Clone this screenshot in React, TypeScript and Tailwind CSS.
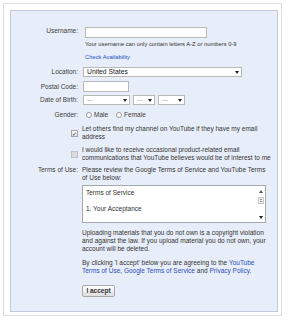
import type { ReactNode } from 'react';

function Arrow() {
  return <span className="h-0 w-0 border-x-[2px] border-t-[3px] border-x-transparent border-t-[#222]" />;
}

function UpArrow() {
  return <span className="h-0 w-0 border-x-[2px] border-b-[3px] border-x-transparent border-b-[#555]" />;
}

function Label({ children, className = '' }: { children?: ReactNode; className?: string }) {
  return <div className={`w-[67px] shrink-0 text-right text-[#3c3c3c] ${className}`}>{children}</div>;
}

function Lines({ lines }: { lines: ReactNode[] }) {
  return (
    <div className="w-[191px] whitespace-nowrap">
      {lines.map((l, i) => (
        <div key={i}>{l}</div>
      ))}
    </div>
  );
}

function Select({ width, value, big }: { width: string; value: string; big?: boolean }) {
  return (
    <div
      className={`flex h-[10px] items-center justify-between border border-[#b8b8b8] bg-white pl-[3px] pr-[2px] ${width} ${
        big ? 'text-[6.8px] text-[#222]' : 'text-[6px] text-[#777]'
      }`}
    >
      <span className="leading-[8px]">{value}</span>
      <Arrow />
    </div>
  );
}

function Radio({ label }: { label: string }) {
  return (
    <span className="flex items-center gap-[2px]">
      <span className="h-[6px] w-[6px] rounded-full border border-[#9a9a9a] bg-white" />
      <span className="text-[#3c3c3c]">{label}</span>
    </span>
  );
}

const link = 'text-[#2a4dc0]';

export default function App() {
  return (
    <div className="h-[320px] w-[290px] bg-white font-['Liberation_Sans',Arial,sans-serif] text-[6.5px] leading-[8px] text-[#333]">
      <div className="ml-[3px] pt-[3px]">
        <div className="h-[313px] w-[279px] border border-[#dedede] pl-[6px] pt-[6px]">
          <div className="flex h-[302px] w-[268px] flex-col border border-[#bfcbdd] bg-[#e8eef9]">
            {/* username */}
            <div className="mt-[16px] flex gap-[4px]">
              <Label>Username:</Label>
              <input className="ml-[3px] h-[11px] w-[122px] border border-[#b8b8b8] bg-white" />
            </div>
            <div className="mt-[2px] flex gap-[4px]">
              <Label />
              <div className="ml-[3px] whitespace-nowrap text-[5.8px] text-[#333]">
                Your username can only contain letters A-Z or numbers 0-9
              </div>
            </div>
            <div className="mt-[5px] flex gap-[4px]">
              <Label />
              <div className={`ml-[3px] text-[5.8px] ${link}`}>Check Availability</div>
            </div>

            {/* location */}
            <div className="mt-[6px] flex items-center gap-[4px]">
              <Label>Location:</Label>
              <div className="ml-[1px]">
                <Select width="w-[159px]" value="United States" big />
              </div>
            </div>

            {/* postal code */}
            <div className="mt-[4px] flex items-center gap-[4px]">
              <Label>Postal Code:</Label>
              <input className="ml-[1px] h-[11px] w-[46px] border border-[#b8b8b8] bg-white" />
            </div>

            {/* date of birth */}
            <div className="mt-[3px] flex items-center gap-[4px]">
              <Label>Date of Birth:</Label>
              <div className="ml-[1px] flex gap-[3px]">
                <Select width="w-[47px]" value="---" />
                <Select width="w-[22px]" value="---" />
                <Select width="w-[27px]" value="---" />
              </div>
            </div>

            {/* gender */}
            <div className="mt-[6px] flex h-[8px] items-center gap-[4px]">
              <Label>Gender:</Label>
              <div className="ml-[4px] flex items-center gap-[8px]">
                <Radio label="Male" />
                <Radio label="Female" />
              </div>
            </div>

            {/* checkboxes */}
            <div className="mt-[6px] flex gap-[4px]">
              <Label className="flex justify-end pt-[5px]">
                <span className="flex h-[7px] w-[7px] items-center justify-center border border-[#a5a5a5] bg-gradient-to-b from-white to-[#e2e2e2] text-[6px] leading-none text-[#334]">
                  ✓
                </span>
              </Label>
              <Lines lines={['Let others find my channel on YouTube if they have my email', 'address']} />
            </div>
            <div className="mt-[5px] flex gap-[4px]">
              <Label className="flex justify-end pt-[5px]">
                <span className="h-[7px] w-[7px] border border-[#c2c2c2] bg-[#dcdcdc]" />
              </Label>
              <Lines
                lines={[
                  'I would like to receive occasional product-related email',
                  'communications that YouTube believes would be of interest to me',
                ]}
              />
            </div>

            {/* terms */}
            <div className="mt-[4px] flex gap-[4px]">
              <Label>Terms of Use:</Label>
              <Lines lines={['Please review the Google Terms of Service and YouTube Terms', 'of Use below:']} />
            </div>
            <div className="mt-[3px] flex gap-[4px]">
              <Label />
              <div className="flex h-[38px] w-[184px] border border-[#a9a9a9] bg-white">
                <div className="flex-1 pl-[3px] pt-[3px]">
                  <div>Terms of Service</div>
                  <div className="mt-[8px]">1. Your Acceptance</div>
                </div>
                <div className="flex w-[9px] flex-col items-center pb-[3px] pt-[4px]">
                  <UpArrow />
                  <div className="mt-[4px] flex h-[7px] w-[6px] flex-col justify-center gap-[1px] border border-[#c9c9c9] bg-[#ececec] px-[1px]">
                    <span className="h-px bg-[#9a9a9a]" />
                    <span className="h-px bg-[#9a9a9a]" />
                  </div>
                  <div className="flex-1" />
                  <Arrow />
                </div>
              </div>
            </div>

            <div className="mt-[6px] flex gap-[4px]">
              <Label />
              <Lines
                lines={[
                  'Uploading materials that you do not own is a copyright violation',
                  'and against the law. If you upload material you do not own, your',
                  'account will be deleted.',
                ]}
              />
            </div>
            <div className="mt-[6px] flex gap-[4px]">
              <Label />
              <Lines
                lines={[
                  <>
                    By clicking 'I accept' below you are agreeing to the <span className={link}>YouTube</span>
                  </>,
                  <>
                    <span className={link}>Terms of Use</span>, <span className={link}>Google Terms of Service</span> and{' '}
                    <span className={link}>Privacy Policy</span>.
                  </>,
                ]}
              />
            </div>

            <div className="mt-[10px] flex gap-[4px]">
              <Label />
              <button className="flex h-[12px] w-[33px] items-center justify-center rounded-[2px] border border-[#a8a8a8] bg-gradient-to-b from-white to-[#dedede] text-[6.5px] font-bold text-[#333]">
                I accept
              </button>
            </div>
          </div>
        </div>
      </div>
    </div>
  );
}
